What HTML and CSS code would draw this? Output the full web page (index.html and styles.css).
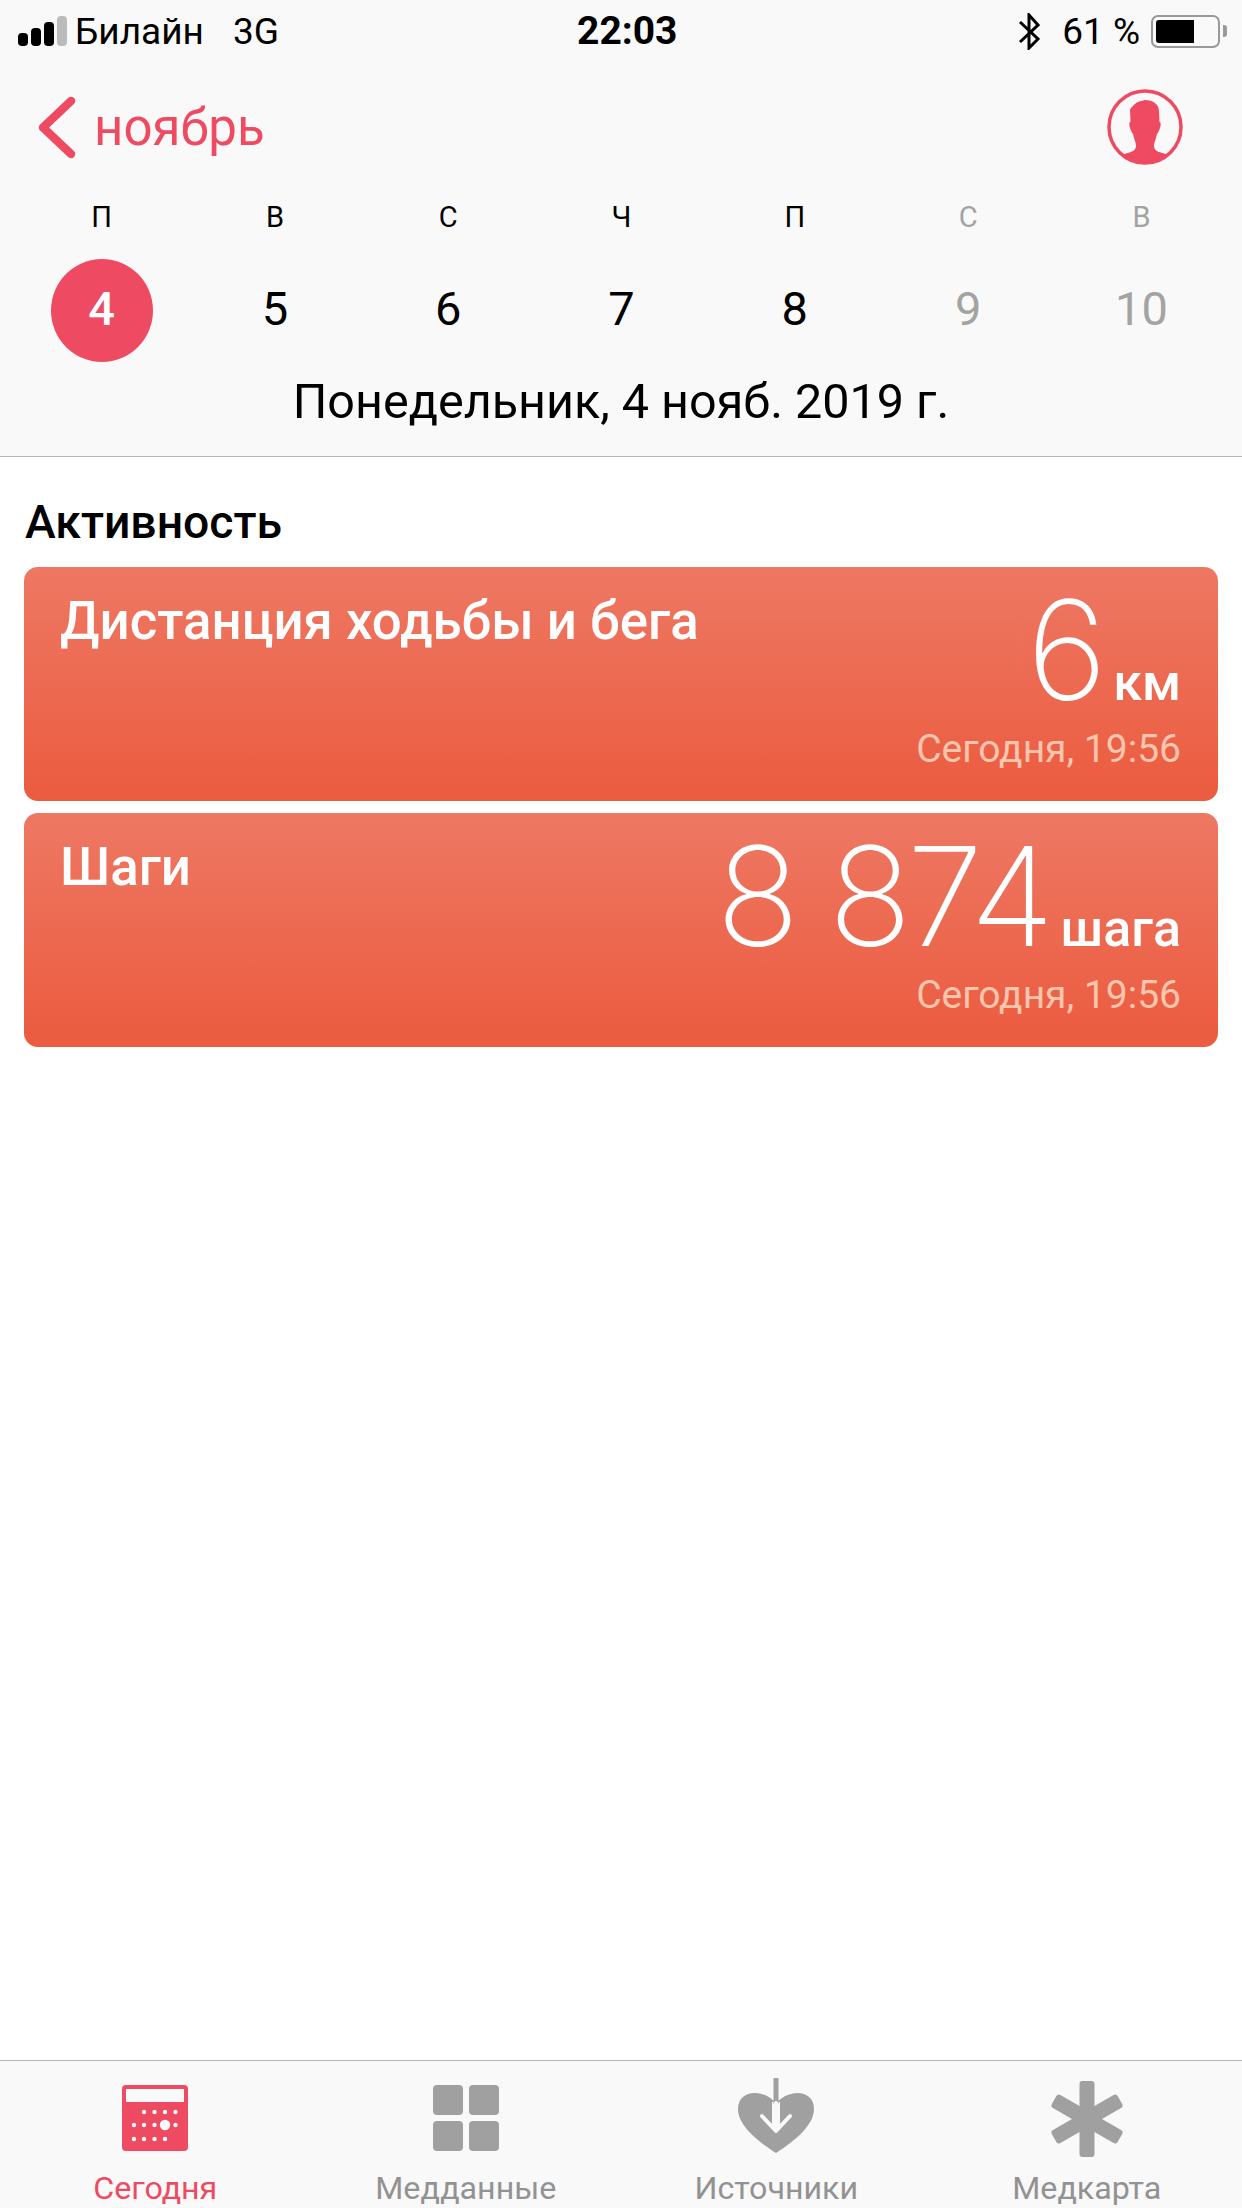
FILE: index.html
```html
<!DOCTYPE html>
<html lang="ru">
<head>
    <meta charset="utf-8">
    <title>Здоровье</title>
    <link rel="stylesheet" href="styles.css">
</head>
<body>
    <header class="top">
        <section class="status">
            <div class="status-left">
                <span class="signal"><i class="bar b1"></i><i class="bar b2"></i><i class="bar b3"></i><i class="bar b4"></i></span>
                <span class="carrier">Билайн</span>
                <span class="net">3G</span>
            </div>
            <span class="time">22:03</span>
            <div class="status-right">
                <svg class="bt" width="22" height="37" viewBox="0 0 22 37">
                    <path d="M2 9 L20 26 L11 35 V2 L20 12 L2 29" fill="none" stroke="#000" stroke-width="3"/>
                </svg>
                <span class="percent">61 %</span>
                <span class="battery"><span class="battery-fill"></span></span>
                <span class="battery-nub"></span>
            </div>
        </section>

        <section class="nav">
            <div class="back">
                <svg width="38" height="63" viewBox="0 0 38 63">
                    <path d="M33 5 L5 31.5 L33 58" fill="none" stroke="#ee4a62" stroke-width="8.5" stroke-linecap="round" stroke-linejoin="round"/>
                </svg>
                <span class="back-label">ноябрь</span>
            </div>
            <svg class="avatar" width="76" height="76" viewBox="0 0 76 76">
                <defs>
                    <clipPath id="avatar-clip"><circle cx="38" cy="38" r="37"/></clipPath>
                </defs>
                <path clip-path="url(#avatar-clip)" fill="#ee4a62" d="M38 11 C44 11 52 14 52 22 L52.5 33 C54 33 54 36 53 39 C52 42 51 44 50 45 C49 50 47 54 47 56 C47 60 49 62 52 63 L62 66 L66 76 L10 76 L14 66 L24 63 C27 62 29 60 29 56 C29 54 27 50 26 45 C25 44 24 42 23 39 C22 36 22 33 23.5 33 L23 21 C24 18 26 17 28 15 C31 12 35 12 38 11 Z"/>
                <circle cx="38" cy="38" r="36" fill="none" stroke="#ee4a62" stroke-width="3.5"/>
            </svg>
        </section>

        <section class="week">
            <span class="weekday">П</span>
            <span class="weekday">В</span>
            <span class="weekday">С</span>
            <span class="weekday">Ч</span>
            <span class="weekday">П</span>
            <span class="weekday off">С</span>
            <span class="weekday off">В</span>
            <span class="day today">4</span>
            <span class="day">5</span>
            <span class="day">6</span>
            <span class="day">7</span>
            <span class="day">8</span>
            <span class="day off">9</span>
            <span class="day off">10</span>
        </section>

        <div class="date">Понедельник, 4 нояб. 2019 г.</div>
    </header>

    <main class="content">
        <h2 class="section-title">Активность</h2>

        <article class="card">
            <h3 class="card-title">Дистанция ходьбы и бега</h3>
            <div class="card-value">
                <div class="reading"><span class="number">6</span><span class="unit">км</span></div>
                <div class="when">Сегодня, 19:56</div>
            </div>
        </article>

        <article class="card">
            <h3 class="card-title">Шаги</h3>
            <div class="card-value">
                <div class="reading"><span class="number">8 874</span><span class="unit">шага</span></div>
                <div class="when">Сегодня, 19:56</div>
            </div>
        </article>
    </main>

    <nav class="tabs">
        <div class="tab active">
            <svg class="tab-icon" width="68" height="80" viewBox="0 0 68 80">
                <rect x="1" y="7" width="66" height="66" rx="4" fill="#ee4a62"/>
                <rect x="5" y="11" width="58" height="13" fill="#f9f9f9"/>
                <g fill="#f9f9f9">
                    <circle cx="23" cy="34" r="2.2"/><circle cx="33.5" cy="34" r="2.2"/><circle cx="44" cy="34" r="2.2"/><circle cx="54.5" cy="34" r="2.2"/>
                    <circle cx="13" cy="47" r="2.2"/><circle cx="23" cy="47" r="2.2"/><circle cx="33.5" cy="47" r="2.2"/><circle cx="44" cy="47" r="5.2"/><circle cx="54.5" cy="47" r="2.2"/>
                    <circle cx="13" cy="61" r="2.2"/><circle cx="23" cy="61" r="2.2"/><circle cx="33.5" cy="61" r="2.2"/><circle cx="44" cy="61" r="2.2"/>
                </g>
            </svg>
            <span class="tab-label">Сегодня</span>
        </div>
        <div class="tab">
            <svg class="tab-icon" width="68" height="80" viewBox="0 0 68 80">
                <g fill="#a0a0a0">
                    <rect x="1" y="7" width="30" height="30" rx="4"/>
                    <rect x="37" y="7" width="30" height="30" rx="4"/>
                    <rect x="1" y="43" width="30" height="30" rx="4"/>
                    <rect x="37" y="43" width="30" height="30" rx="4"/>
                </g>
            </svg>
            <span class="tab-label">Медданные</span>
        </div>
        <div class="tab">
            <svg class="tab-icon" width="78" height="80" viewBox="0 0 78 80">
                <path fill="#a0a0a0" d="M39 75 C25 66 1 49 1 31 C1 20 9 15 17 15 C27 15 35 20 39 26 C43 20 51 15 61 15 C69 15 77 20 77 31 C77 49 53 66 39 75 Z"/>
                <path d="M39 24 V52" stroke="#f9f9f9" stroke-width="8" fill="none"/>
                <path d="M39 0 V25" stroke="#a0a0a0" stroke-width="5" stroke-linecap="round" fill="none"/>
                <path d="M39 25 V52 M25 38 L39 53 L53 38" stroke="#f9f9f9" stroke-width="4" stroke-linecap="round" stroke-linejoin="round" fill="none"/>
            </svg>
            <span class="tab-label">Источники</span>
        </div>
        <div class="tab">
            <svg class="tab-icon" width="76" height="80" viewBox="0 0 76 80">
                <g fill="#a0a0a0">
                    <rect x="30.5" y="3" width="15" height="76" rx="3"/>
                    <rect x="30.5" y="3" width="15" height="76" rx="3" transform="rotate(60 38 41)"/>
                    <rect x="30.5" y="3" width="15" height="76" rx="3" transform="rotate(-60 38 41)"/>
                </g>
            </svg>
            <span class="tab-label">Медкарта</span>
        </div>
    </nav>
</body>
</html>
```

FILE: styles.css
```css
* {
    box-sizing: border-box;
}
html, body {
    margin: 0;
    height: 2208px;
}
body {
    display: flex;
    flex-flow: column;
    overflow: hidden;
    background: #fff;
    color: #000;
    font-family: Roboto, "Liberation Sans", sans-serif;
}

.top {
    height: 457px;
    background: #f9f9f9;
    border-bottom: 1px solid #b7b7b7;
}

/* status bar */
.status {
    display: flex;
    align-items: center;
    height: 62px;
    padding: 0 15px 0 18px;
    font-size: 37px;
}
.status-left {
    display: flex;
    align-items: center;
    width: 559px;
}
.signal {
    display: flex;
    align-items: flex-end;
    gap: 3px;
    height: 30px;
}
.bar {
    display: block;
    width: 10px;
    border-radius: 4px;
    background: #000;
}
.b1 { height: 13px; }
.b2 { height: 18px; }
.b3 { height: 24px; }
.b4 { height: 30px; background: #bbb; }
.carrier {
    margin-left: 8px;
}
.net {
    margin-left: 29px;
}
.time {
    font-size: 39px;
    font-weight: 700;
}
.status-right {
    display: flex;
    align-items: center;
    margin-left: auto;
}
.percent {
    margin-left: 22px;
}
.battery {
    display: block;
    width: 69px;
    height: 33px;
    margin-left: 11px;
    padding: 3px;
    border: 2.5px solid #999;
    border-radius: 7px;
}
.battery-fill {
    display: block;
    width: 38px;
    height: 100%;
    background: #000;
    border-radius: 3px 0 0 3px;
}
.battery-nub {
    display: block;
    width: 4px;
    height: 12px;
    margin-left: 3px;
    background: #999;
    border-radius: 0 3px 3px 0;
}

/* month row */
.nav {
    display: flex;
    justify-content: space-between;
    align-items: center;
    height: 110px;
    margin-top: 10px;
    padding: 0 59px 0 38px;
}
.back {
    display: flex;
    align-items: center;
    gap: 18px;
    color: #ee4a62;
    font-size: 51px;
}

/* week strip */
.week {
    display: grid;
    grid-template-columns: repeat(7, 173.3px);
    padding: 0 15px;
}
.weekday {
    height: 77px;
    padding-top: 18px;
    text-align: center;
    font-size: 29px;
}
.day {
    justify-self: center;
    width: 102px;
    height: 103px;
    line-height: 100px;
    text-align: center;
    font-size: 47px;
}
.off {
    color: #a3a3a3;
}
.today {
    border-radius: 50%;
    background: #ee4a62;
    color: #fff;
    font-weight: 500;
}
.date {
    margin-top: 11px;
    text-align: center;
    font-size: 48.5px;
}

/* activity list */
.content {
    flex: 1;
    padding: 0 24px;
}
.section-title {
    margin: 40px 0 20px 1px;
    font-size: 46.3px;
    font-weight: 500;
    line-height: 50px;
}
.card {
    display: flex;
    justify-content: space-between;
    height: 234px;
    margin-bottom: 12px;
    padding: 29px 37px 0 36px;
    border-radius: 14px;
    background: linear-gradient(#ee7863, #eb5b3f);
    color: #fff;
}
.card-title {
    margin: 0;
    font-size: 52.8px;
    font-weight: 500;
    line-height: 50px;
}
.card-value {
    margin-top: -16px;
    text-align: right;
}
.reading {
    display: flex;
    align-items: baseline;
    justify-content: flex-end;
}
.number {
    font-family: Inter, Roboto, sans-serif;
    font-size: 138px;
    font-weight: 250;
    line-height: 140px;
    letter-spacing: -5px;
}
.unit {
    margin-left: 11px;
    font-size: 52px;
    font-weight: 500;
}
.when {
    margin-top: 6px;
    font-size: 39px;
    color: #fac5ad;
}

/* tab bar */
.tabs {
    display: grid;
    grid-template-columns: repeat(4, 1fr);
    height: 148px;
    padding-top: 17px;
    background: #f9f9f9;
    border-top: 1px solid #b7b7b7;
}
.tab {
    display: flex;
    flex-flow: column;
    align-items: center;
    color: #929292;
}
.tab.active {
    color: #ee4a62;
}
.tab-icon {
    display: block;
}
.tab-label {
    margin-top: 10px;
    font-size: 32.2px;
    line-height: 40px;
}
```
